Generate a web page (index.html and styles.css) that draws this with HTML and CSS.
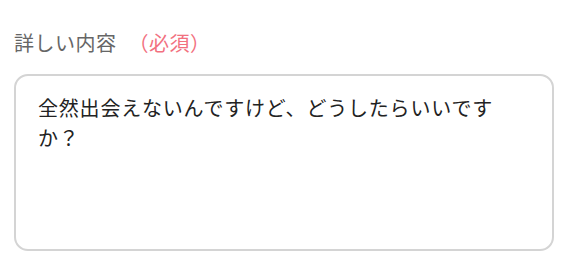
FILE: index.html
```html
<!DOCTYPE html>
<html lang="ja">
<head>
    <meta charset="UTF-8">
    <meta name="viewport" content="width=device-width">
    <title>詳しい内容</title>
    <link rel="stylesheet" href="styles.css">
</head>
<body>
<form class="form">
    <label class="label" for="detail">詳しい内容<span class="required">（必須）</span></label>
    <textarea id="detail" class="detail">全然出会えないんですけど、どうしたらいいですか？</textarea>
</form>
</body>
</html>
```

FILE: styles.css
```css
body {
    margin: 0;
    padding: 0;
    background: #fff;
    font-family: "Noto Sans CJK JP", "Noto Sans", sans-serif;
}

.form {
    display: flex;
    flex-direction: column;
    padding: 29px 14px 0 14px;
}

.label {
    font-size: 20px;
    line-height: 28px;
    color: #666;
    letter-spacing: 0.5px;
    margin-bottom: 17px;
}

.required {
    margin-left: 12px;
    color: #f2717f;
}

.detail {
    box-sizing: border-box;
    width: 540px;
    height: 177px;
    padding: 17px 22px;
    border: 2px solid #d4d4d4;
    border-radius: 14px;
    font-family: inherit;
    font-size: 20px;
    line-height: 30px;
    letter-spacing: 0.8px;
    color: #222;
    resize: none;
    outline: none;
}
```
